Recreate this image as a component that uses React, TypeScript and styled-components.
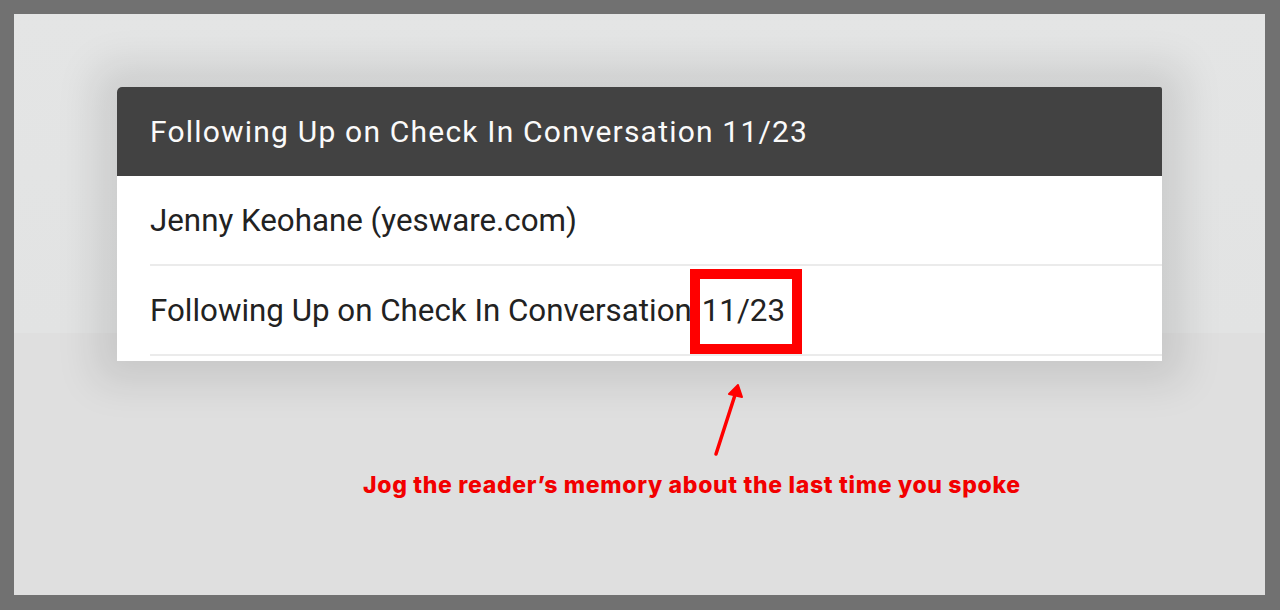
import styled, { createGlobalStyle } from 'styled-components';

const GlobalStyle = createGlobalStyle`
  html, body {
    margin: 0;
    padding: 0;
    background: #717171;
  }
  body {
    font-family: Roboto, "Liberation Sans", sans-serif;
  }
`;

const Frame = styled.div`
  width: 1280px;
  height: 610px;
  padding: 14px 15px 15px 14px;
  box-sizing: border-box;
`;

const Panel = styled.div`
  height: 100%;
  background: linear-gradient(#e4e5e5 0, #e2e3e3 319px, #dfdfdf 319px);
  padding: 73px 0 0 103px;
  box-sizing: border-box;
`;

const Card = styled.div`
  width: 1045px;
  background: #fff;
  border-radius: 5px 2px 0 0;
  box-shadow: 0 0 40px 22px rgba(0, 0, 0, 0.1);
  padding-bottom: 5px;
`;

const Header = styled.div`
  height: 89px;
  background: #424242;
  border-radius: 5px 2px 0 0;
  display: flex;
  align-items: center;
  padding-left: 33px;
  color: #fafafa;
  font-size: 30px;
  letter-spacing: 1.2px;
`;

const Row = styled.div`
  height: 88px;
  margin-left: 33px;
  border-bottom: 2px solid #ebebeb;
  display: flex;
  align-items: center;
  color: #222;
  font-size: 31.3px;
`;

const Highlight = styled.span`
  position: relative;
  margin-left: 10px;

  &::after {
    content: '';
    position: absolute;
    left: -12px;
    right: -17px;
    top: -23px;
    bottom: -25px;
    border: 10px solid #ff0000;
  }
`;

const Note = styled.div`
  display: flex;
  flex-direction: column;
  padding-left: 246px;
`;

const Arrow = styled.svg`
  display: block;
  margin: 22px 0 0 346px;
`;

const Caption = styled.div`
  margin-top: 8px;
  color: #f20000;
  font-family: Inter, "Open Sans", sans-serif;
  font-weight: 800;
  font-size: 23px;
  letter-spacing: 0.68px;
`;

export default function App() {
  return (
    <>
      <GlobalStyle />
      <Frame>
        <Panel>
          <Card>
            <Header>Following Up on Check In Conversation 11/23</Header>
            <Row>Jenny Keohane (yesware.com)</Row>
            <Row>
              Following Up on Check In Conversation
              <Highlight>11/23</Highlight>
            </Row>
          </Card>
          <Note>
            <Arrow width="40" height="80" viewBox="0 0 40 80">
              <line x1="7" y1="71" x2="26" y2="12" stroke="#ff0000" strokeWidth="3.5" strokeLinecap="round" />
              <polygon points="29,2 20,11 33,14" fill="#ff0000" stroke="#ff0000" strokeWidth="2" strokeLinejoin="round" />
            </Arrow>
            <Caption>Jog the reader’s memory about the last time you spoke</Caption>
          </Note>
        </Panel>
      </Frame>
    </>
  );
}
